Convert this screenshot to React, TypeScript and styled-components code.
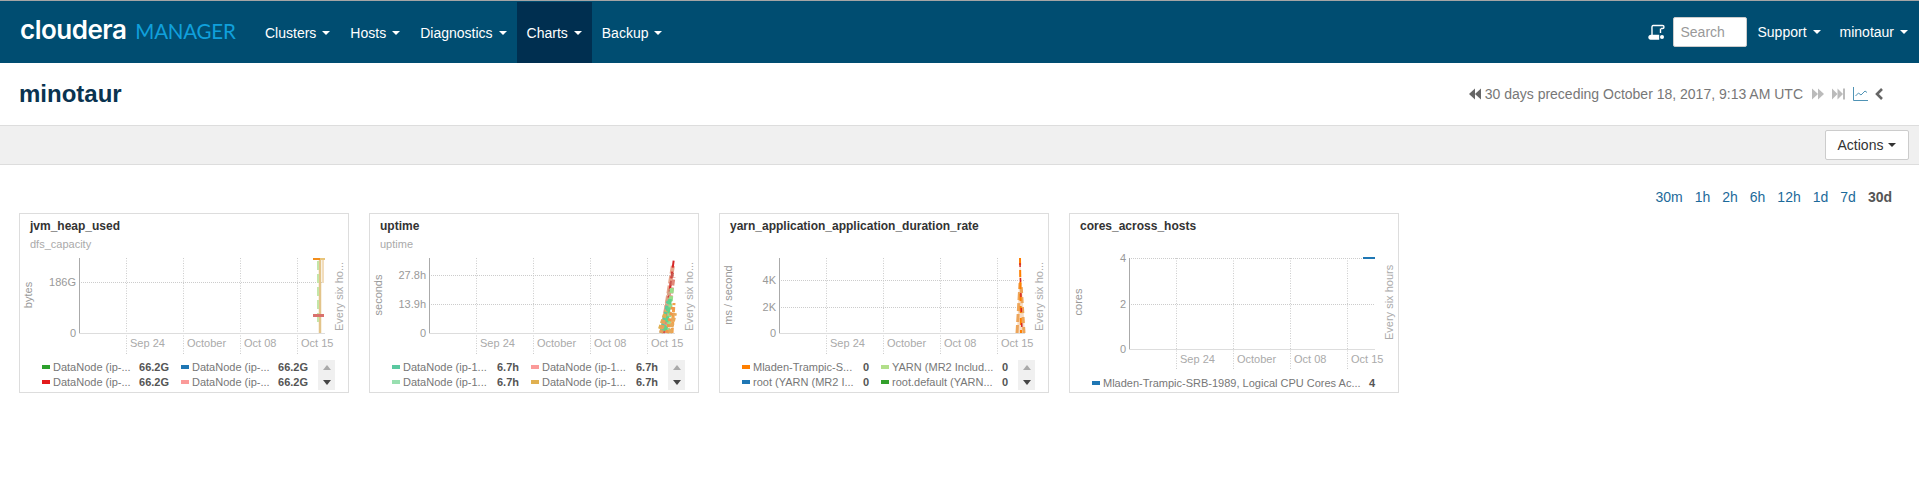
import React from 'react';
import styled, { createGlobalStyle } from 'styled-components';

const GlobalStyle = createGlobalStyle`
    html, body {
        margin: 0;
        background: #fff;
        font-family: "Liberation Sans", Arial, sans-serif;
        color: #555;
    }
`;

const Page = styled.div`
    width: 1919px;
    height: 492px;
    overflow: hidden;
`;

const Navbar = styled.header`
    display: flex;
    align-items: stretch;
    height: 62px;
    border-top: 1px solid #a5a5a5;
    background: #004d71;
    color: #fff;
    font-size: 14px;
`;

const Logo = styled.div`
    display: flex;
    align-items: baseline;
    width: 255px;
    padding: 13px 0 0 20px;
    box-sizing: border-box;
`;

const LogoWord = styled.span`
    font-family: Inter, sans-serif;
    font-weight: 600;
    font-size: 26px;
    letter-spacing: -0.5px;
    color: #fff;
`;

const LogoProduct = styled.span`
    margin-left: 9px;
    font-family: Lato, sans-serif;
    font-size: 20.5px;
    letter-spacing: -0.2px;
    color: #10a0dc;
`;

const NavMenu = styled.nav`
    display: flex;
    align-items: stretch;
`;

const NavItem = styled.a<{ $active?: boolean }>`
    display: flex;
    align-items: center;
    gap: 6px;
    margin-top: 1px;
    padding: 0 10px;
    background: ${(p) => (p.$active ? '#002f50' : 'transparent')};
    color: #fff;
`;

const Caret = styled.i<{ $color?: string }>`
    display: inline-block;
    width: 0;
    height: 0;
    border-top: 4px solid ${(p) => p.$color ?? '#fff'};
    border-left: 4px solid transparent;
    border-right: 4px solid transparent;
`;

const NavRight = styled.div`
    display: flex;
    align-items: center;
    margin-left: auto;
    padding-right: 11px;
`;

const SearchBox = styled.input`
    width: 74px;
    height: 30px;
    margin: 0 10px 0 8px;
    padding: 0 6px;
    box-sizing: border-box;
    border: 1px solid #ccc;
    border-radius: 2px;
    background: #fff;
    font: 14px "Liberation Sans", Arial, sans-serif;

    &::placeholder {
        color: #999;
        opacity: 1;
    }
`;

const NavLink = styled.a`
    display: flex;
    align-items: center;
    gap: 6px;
    margin-left: 19px;
    color: #fff;

    &:first-of-type {
        margin-left: 0;
    }
`;

const TitleBar = styled.div`
    display: flex;
    align-items: center;
    justify-content: space-between;
    height: 62px;
    padding: 0 36px 0 19px;
`;

const PageTitle = styled.h1`
    margin: 0;
    font-size: 24px;
    font-weight: bold;
    color: #0a3350;
`;

const TimeControl = styled.div`
    display: flex;
    align-items: center;
    font-size: 14px;
    color: #777;
`;

const TimeIcon = styled.span<{ $left?: number }>`
    display: flex;
    margin-left: ${(p) => p.$left ?? 0}px;
`;

const TimeText = styled.span`
    margin: 0 9px 0 4px;
`;

const ActionBand = styled.div`
    display: flex;
    align-items: center;
    justify-content: flex-end;
    height: 38px;
    padding-right: 10px;
    border-top: 1px solid #ddd;
    border-bottom: 1px solid #ddd;
    background: #f0f0f0;
`;

const ActionsButton = styled.button`
    display: flex;
    align-items: center;
    justify-content: center;
    gap: 5px;
    width: 84px;
    height: 30px;
    border: 1px solid #ccc;
    border-radius: 2px;
    background: #fff;
    color: #333;
    font: 14px "Liberation Sans", Arial, sans-serif;
`;

const RangeRow = styled.div`
    display: flex;
    justify-content: flex-end;
    gap: 12px;
    margin-top: 24px;
    padding-right: 27px;
    font-size: 14px;
    line-height: 17px;
`;

const RangeLink = styled.a<{ $active?: boolean }>`
    color: ${(p) => (p.$active ? '#555' : '#1c6a9a')};
    font-weight: ${(p) => (p.$active ? 'bold' : 'normal')};
`;

const Cards = styled.div`
    display: flex;
    gap: 20px;
    margin-top: 7px;
    padding-left: 19px;
`;

const Card = styled.section`
    display: flex;
    flex-direction: column;
    width: 330px;
    height: 180px;
    box-sizing: border-box;
    border: 1px solid #ddd;
    background: #fff;
`;

const CardHead = styled.div`
    height: 39px;
    padding: 5px 0 0 10px;
    box-sizing: border-box;
`;

const CardTitle = styled.div`
    font-size: 12px;
    font-weight: bold;
    line-height: 15px;
    color: #333;
`;

const CardSubtitle = styled.div`
    margin-top: 4px;
    font-size: 11px;
    line-height: 13px;
    color: #aaa;
`;

const ChartSvg = styled.svg`
    display: block;
    flex: none;
    font-family: "Liberation Sans", Arial, sans-serif;
`;

const LegendWrap = styled.div`
    display: flex;
    padding-left: 22px;
`;

const LegendGrid = styled.div<{ $columns: number }>`
    display: grid;
    grid-template-columns: repeat(${(p) => p.$columns}, ${(p) => (p.$columns === 1 ? '283px' : '127px')});
    column-gap: 12px;
    align-content: start;
    padding-top: 3px;
`;

const LegendItem = styled.div`
    display: flex;
    align-items: center;
    height: 15px;
    font-size: 11px;
    color: #777;
`;

const Swatch = styled.i<{ $color: string }>`
    flex: none;
    width: 8px;
    height: 4px;
    margin-right: 3px;
    background: ${(p) => p.$color};
`;

const LegendLabel = styled.span`
    white-space: nowrap;
`;

const LegendValue = styled.b`
    flex: none;
    margin-left: auto;
    font-weight: bold;
    color: #555;
`;

const Scroller = styled.div`
    display: flex;
    flex-direction: column;
    align-items: center;
    justify-content: space-around;
    width: 17px;
    height: 30px;
    margin: 4px 0 0 10px;
    background: #f0f0f0;
`;

const ScrollArrow = styled.i<{ $up?: boolean }>`
    width: 0;
    height: 0;
    border-left: 4px solid transparent;
    border-right: 4px solid transparent;
    ${(p) => (p.$up ? 'border-bottom: 5px solid #aaa;' : 'border-top: 5px solid #444;')}
`;

type LegendEntry = { color: string; label: string; value: string };
type Tick = { y: number; label: string };

type ChartCard = {
    title: string;
    subtitle?: string;
    unit: string;
    unitY: number;
    rightLabel: string;
    ticks: Tick[];
    legend: LegendEntry[];
    bottom: number;
    marks: React.ReactNode;
};

const navItems = ['Clusters', 'Hosts', 'Diagnostics', 'Charts', 'Backup'];
const ranges = ['30m', '1h', '2h', '6h', '12h', '1d', '7d', '30d'];
const gridXs = [106, 163, 220, 277];
const gridLabels = ['Sep 24', 'October', 'Oct 08', 'Oct 15'];

const uptimeLines = [
    { d: 'M292 80 L303 12', c: '#e8a58c', w: 4, dash: '8 2' },
    { d: 'M294 80 L304 5', c: '#d62728', w: 2, dash: '7 4' },
    { d: 'M293 80 L303 18', c: '#c9574e', w: 2.5, dash: '5 3' },
    { d: 'M296 80 L304 24', c: '#e2887a', w: 3, dash: '6 2' },
    { d: 'M292 78 L300 36', c: '#d9a184', w: 4, dash: '4 2' },
    { d: 'M298 80 L302 34', c: '#98df8a', w: 4, dash: '5 3' },
    { d: 'M291 80 L298 48', c: '#5ac8a0', w: 3, dash: '4 2' },
    { d: 'M295 78 L300 46', c: '#5fd38a', w: 4, dash: '6 3' },
    { d: 'M302 80 L304 50', c: '#f2a04a', w: 3, dash: '5 2' },
    { d: 'M290 76 L296 58', c: '#e0b050', w: 4, dash: '4 2' },
    { d: 'M297 80 L303 54', c: '#f0964a', w: 4, dash: '3 3' },
    { d: 'M300 80 L305 60', c: '#e7a95a', w: 4, dash: '4 2' },
    { d: 'M291 80 L294 66', c: '#e9a05a', w: 4, dash: '3 2' },
];

const cards: ChartCard[] = [
    {
        title: 'jvm_heap_used',
        subtitle: 'dfs_capacity',
        unit: 'bytes',
        unitY: 42,
        rightLabel: 'Every six ho...',
        bottom: 80,
        ticks: [
            { y: 29, label: '186G' },
            { y: 80, label: '0' },
        ],
        legend: [
            { color: '#2ca02c', label: 'DataNode (ip-...', value: '66.2G' },
            { color: '#1f77b4', label: 'DataNode (ip-...', value: '66.2G' },
            { color: '#e31a1c', label: 'DataNode (ip-...', value: '66.2G' },
            { color: '#fb9a99', label: 'DataNode (ip-...', value: '66.2G' },
        ],
        marks: (
            <>
                <line x1="300" y1="5" x2="300" y2="80" stroke="#e3c48a" strokeWidth="2.5" />
                <line x1="298" y1="8" x2="298" y2="70" stroke="#c5e6a8" strokeWidth="2" strokeDasharray="9 4" />
                <line x1="303" y1="6" x2="303" y2="30" stroke="#f2ddbc" strokeWidth="2" />
                <rect x="293" y="5" width="7" height="2" fill="#f28e1c" />
                <rect x="300" y="5" width="5" height="2" fill="#e8c47a" />
                <rect x="293" y="61" width="11" height="3" fill="#d9716c" />
            </>
        ),
    },
    {
        title: 'uptime',
        subtitle: 'uptime',
        unit: 'seconds',
        unitY: 42,
        rightLabel: 'Every six ho...',
        bottom: 80,
        ticks: [
            { y: 22, label: '27.8h' },
            { y: 51, label: '13.9h' },
            { y: 80, label: '0' },
        ],
        legend: [
            { color: '#5ac8a0', label: 'DataNode (ip-1...', value: '6.7h' },
            { color: '#fb9a99', label: 'DataNode (ip-1...', value: '6.7h' },
            { color: '#98dfb0', label: 'DataNode (ip-1...', value: '6.7h' },
            { color: '#e0b050', label: 'DataNode (ip-1...', value: '6.7h' },
        ],
        marks: (
            <>
                {uptimeLines.map((l) => (
                    <path key={l.d} d={l.d} stroke={l.c} strokeWidth={l.w} strokeDasharray={l.dash} fill="none" />
                ))}
            </>
        ),
    },
    {
        title: 'yarn_application_application_duration_rate',
        unit: 'ms / second',
        unitY: 42,
        rightLabel: 'Every six ho...',
        bottom: 80,
        ticks: [
            { y: 27, label: '4K' },
            { y: 54, label: '2K' },
            { y: 80, label: '0' },
        ],
        legend: [
            { color: '#ff7f00', label: 'Mladen-Trampic-S...', value: '0' },
            { color: '#b2df8a', label: 'YARN (MR2 Includ...', value: '0' },
            { color: '#1f77b4', label: 'root (YARN (MR2 I...', value: '0' },
            { color: '#33a02c', label: 'root.default (YARN...', value: '0' },
        ],
        marks: (
            <>
                <path d="M297 80 L300 5 L305 80 Z" fill="#f6dcc4" />
                <path d="M297 80 L300 30" stroke="#eda55a" strokeWidth="3" strokeDasharray="8 3" fill="none" />
                <path d="M304 80 L301 30" stroke="#eda55a" strokeWidth="3" strokeDasharray="6 4" fill="none" />
                <path d="M300 5 L301 80" stroke="#ff7f00" strokeWidth="2" strokeDasharray="7 5" fill="none" />
                <path d="M300 10 L302 80" stroke="#d62728" strokeWidth="1.5" strokeDasharray="4 11" fill="none" />
            </>
        ),
    },
    {
        title: 'cores_across_hosts',
        unit: 'cores',
        unitY: 49,
        rightLabel: 'Every six hours',
        bottom: 96,
        ticks: [
            { y: 5, label: '4' },
            { y: 51, label: '2' },
            { y: 96, label: '0' },
        ],
        legend: [{ color: '#1f77b4', label: 'Mladen-Trampic-SRB-1989, Logical CPU Cores Ac...', value: '4' }],
        marks: <rect x="293" y="4" width="12" height="2" fill="#1f77b4" />,
    },
];

const MetricChart = ({ card }: { card: ChartCard }) => {
    const { bottom, ticks, unit, unitY, rightLabel, marks } = card;
    const gridBottom = bottom + 21;
    const labelY = bottom + 14;
    const rightBottom = bottom === 96 ? 87 : 78;

    return (
        <ChartSvg width={328} height={gridBottom + 2} viewBox={`0 0 328 ${gridBottom + 2}`}>
            <text transform={`translate(12 ${unitY}) rotate(-90)`} textAnchor="middle" fontSize="11" fill="#999">
                {unit}
            </text>
            <text transform={`translate(323 ${rightBottom}) rotate(-90)`} fontSize="11" fill="#aaa">
                {rightLabel}
            </text>
            {ticks
                .filter((t) => t.y !== bottom)
                .map((t) => (
                    <line key={t.y} x1="59" x2="305" y1={t.y + 0.5} y2={t.y + 0.5} stroke="#ccc" strokeDasharray="1 1" />
                ))}
            {gridXs.map((x, i) => (
                <React.Fragment key={x}>
                    <line x1={x + 0.5} x2={x + 0.5} y1="5" y2={gridBottom} stroke="#ccc" strokeDasharray="1 1.5" />
                    <text x={x + 4} y={labelY} fontSize="11" fill="#aaa">
                        {gridLabels[i]}
                    </text>
                </React.Fragment>
            ))}
            <line x1="59.5" x2="59.5" y1="5" y2={bottom} stroke="#aaa" />
            <line x1="59" x2="305" y1={bottom + 0.5} y2={bottom + 0.5} stroke="#ddd" />
            {ticks.map((t) => (
                <text key={t.label} x="56" y={t.y + 4} textAnchor="end" fontSize="11" fill="#999">
                    {t.label}
                </text>
            ))}
            {marks}
        </ChartSvg>
    );
};

const ConsoleIcon = () => (
    <svg width="17" height="17" viewBox="0 0 17 17" fill="none" stroke="#fff" strokeWidth="1.4">
        <path d="M5 1.5h9.5a1.5 1.5 0 0 1 0 3H13" />
        <path d="M5 1.5C3.6 1.5 4 4 4 6v5" />
        <path d="M1 13.5a2 2 0 0 1 2-2h7.5v3.5H2.5A1.5 1.5 0 0 1 1 13.5z" fill="#fff" />
        <path d="M12.5 4.5V9" />
        <circle cx="14" cy="13" r="2" fill="#fff" stroke="none" />
    </svg>
);

const BackwardIcon = () => (
    <svg width="12" height="12" viewBox="0 0 12 12" fill="#666">
        <path d="M6 0.5v11L0 6z" />
        <path d="M12 0.5v11L6 6z" />
    </svg>
);

const ForwardIcon = () => (
    <svg width="12" height="12" viewBox="0 0 12 12" fill="#bbb">
        <path d="M0 0.5v11L6 6z" />
        <path d="M6 0.5v11L12 6z" />
    </svg>
);

const StepForwardIcon = () => (
    <svg width="13" height="12" viewBox="0 0 13 12" fill="#bbb">
        <path d="M0 0.5v11L5.5 6z" />
        <path d="M5.5 0.5v11L11 6z" />
        <rect x="11" y="0.5" width="2" height="11" />
    </svg>
);

const LineChartIcon = () => (
    <svg width="15" height="14" viewBox="0 0 15 14" fill="none" stroke="#4f93b5" strokeWidth="1">
        <path d="M.5 0v13.5H15" />
        <path d="M2.5 9l3-3 2.5 2 4-4 2 1.5" />
    </svg>
);

const ChevronLeftIcon = () => (
    <svg width="8" height="12" viewBox="0 0 8 12" fill="none" stroke="#666" strokeWidth="2.6">
        <path d="M7 1L2 6l5 5" />
    </svg>
);

const App = () => (
    <Page>
        <GlobalStyle />
        <Navbar>
            <Logo>
                <LogoWord>cloudera</LogoWord>
                <LogoProduct>MANAGER</LogoProduct>
            </Logo>
            <NavMenu>
                {navItems.map((item) => (
                    <NavItem key={item} $active={item === 'Charts'}>
                        {item} <Caret />
                    </NavItem>
                ))}
            </NavMenu>
            <NavRight>
                <ConsoleIcon />
                <SearchBox placeholder="Search" readOnly />
                <NavLink>
                    Support <Caret />
                </NavLink>
                <NavLink>
                    minotaur <Caret />
                </NavLink>
            </NavRight>
        </Navbar>
        <TitleBar>
            <PageTitle>minotaur</PageTitle>
            <TimeControl>
                <TimeIcon>
                    <BackwardIcon />
                </TimeIcon>
                <TimeText>30 days preceding October 18, 2017, 9:13 AM UTC</TimeText>
                <TimeIcon>
                    <ForwardIcon />
                </TimeIcon>
                <TimeIcon $left={8}>
                    <StepForwardIcon />
                </TimeIcon>
                <TimeIcon $left={8}>
                    <LineChartIcon />
                </TimeIcon>
                <TimeIcon $left={7}>
                    <ChevronLeftIcon />
                </TimeIcon>
            </TimeControl>
        </TitleBar>
        <ActionBand>
            <ActionsButton>
                Actions <Caret $color="#333" />
            </ActionsButton>
        </ActionBand>
        <RangeRow>
            {ranges.map((r) => (
                <RangeLink key={r} $active={r === '30d'}>
                    {r}
                </RangeLink>
            ))}
        </RangeRow>
        <Cards>
            {cards.map((card) => (
                <Card key={card.title}>
                    <CardHead>
                        <CardTitle>{card.title}</CardTitle>
                        {card.subtitle && <CardSubtitle>{card.subtitle}</CardSubtitle>}
                    </CardHead>
                    <MetricChart card={card} />
                    <LegendWrap>
                        <LegendGrid $columns={card.legend.length > 1 ? 2 : 1}>
                            {card.legend.map((entry, i) => (
                                <LegendItem key={i}>
                                    <Swatch $color={entry.color} />
                                    <LegendLabel>{entry.label}</LegendLabel>
                                    <LegendValue>{entry.value}</LegendValue>
                                </LegendItem>
                            ))}
                        </LegendGrid>
                        {card.legend.length > 1 && (
                            <Scroller>
                                <ScrollArrow $up />
                                <ScrollArrow />
                            </Scroller>
                        )}
                    </LegendWrap>
                </Card>
            ))}
        </Cards>
    </Page>
);

export default App;
